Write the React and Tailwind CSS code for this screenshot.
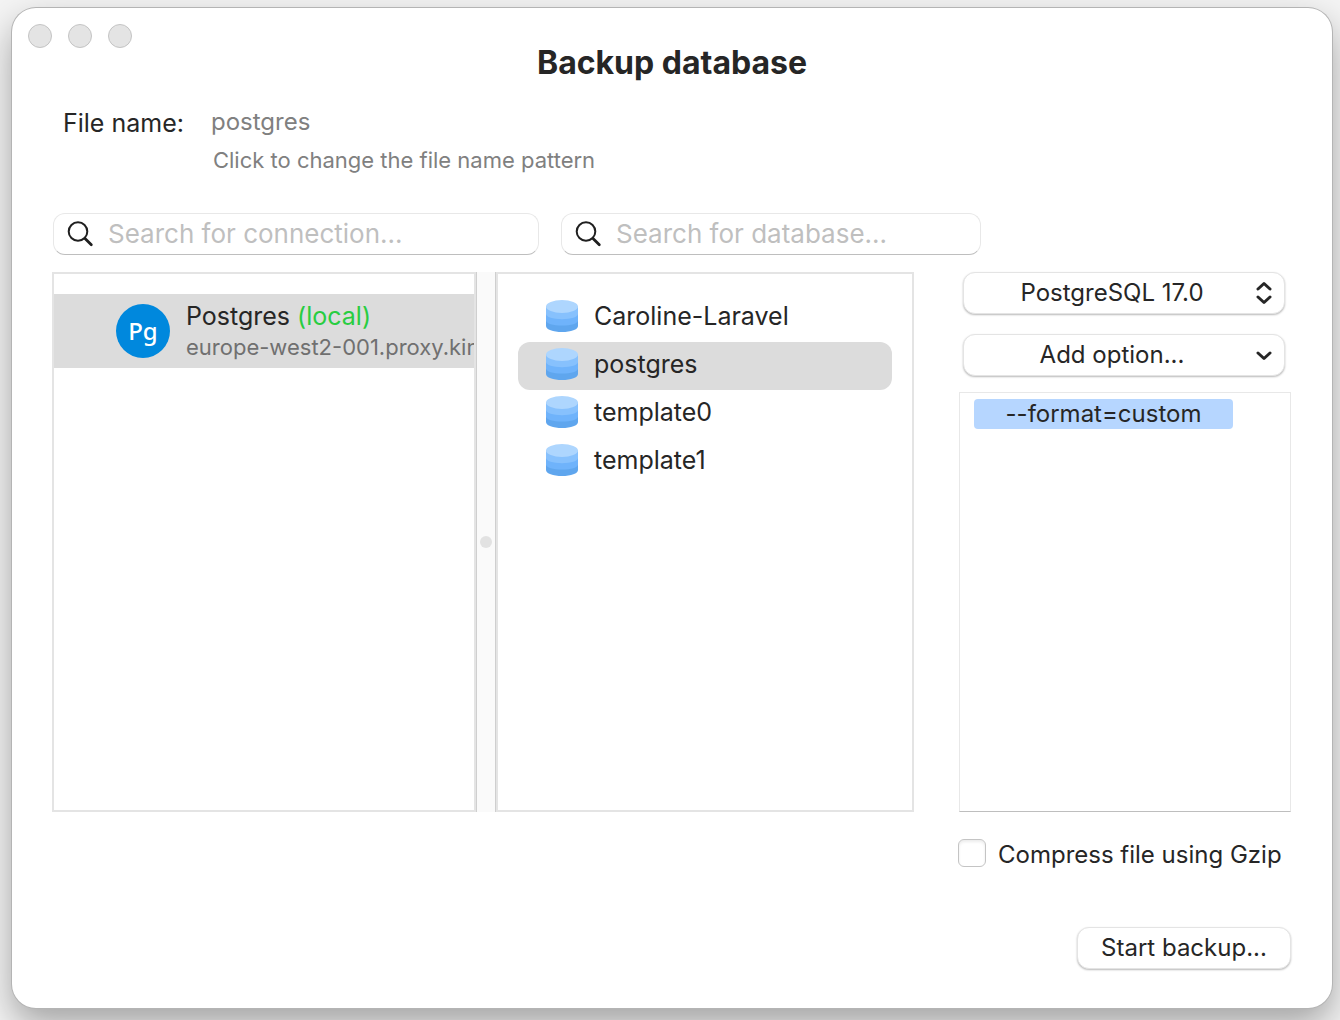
import { useState } from "react";

const databases = ["Caroline-Laravel", "postgres", "template0", "template1"];

function SearchIcon() {
  return (
    <svg className="size-7 shrink-0" viewBox="0 0 28 28" fill="none" stroke="#1f1f1f" strokeLinecap="round">
      <circle cx="12" cy="11.5" r="9.3" strokeWidth="2" />
      <path d="M19 18.5L25.3 24.8" strokeWidth="2.8" />
    </svg>
  );
}

function DatabaseIcon() {
  return (
    <svg className="h-8 w-8 shrink-0" viewBox="0 0 32 32">
      <path d="M0 6.500V26C0 29.500 7 32 16 32s16-2.500 16-6V6.500z" fill="#5fa6ee" />
      <path d="M0 6.500V20.500C0 23.500 7 25.500 16 25.500s16-2 16-5V6.500z" fill="#6fb3fb" />
      <path d="M0 6.500V14C0 17 7 19.200 16 19.200s16-2.200 16-5.200V6.500z" fill="#87c1fd" />
      <ellipse cx="16" cy="6.500" rx="16" ry="6.500" fill="#aed6fe" />
    </svg>
  );
}

function SearchField({ label, className }) {
  return (
    <label
      className={`flex h-[42px] items-center gap-3.5 rounded-xl border border-[#e8e8e8] border-b-[#bebebe] bg-white px-3 ${className}`}
    >
      <SearchIcon />
      <input
        type="text"
        aria-label={label}
        placeholder={label}
        className="min-w-0 flex-1 bg-transparent text-[26px] leading-8 outline-none placeholder:text-[#bfbfbf]"
      />
    </label>
  );
}

function SelectBox({ label, value, children }) {
  return (
    <div className="grid h-[42px] items-center rounded-xl border border-[#e4e4e4] bg-white shadow-[0_1px_2px_rgba(0,0,0,0.28)]">
      <select
        aria-label={label}
        className="col-start-1 row-start-1 h-full w-full appearance-none rounded-xl bg-transparent pr-6 text-center text-[24px] leading-8 outline-none [text-align-last:center]"
      >
        <option>{value}</option>
      </select>
      <span className="pointer-events-none col-start-1 row-start-1 mr-3 justify-self-end">{children}</span>
    </div>
  );
}

export default function App() {
  const [selected, setSelected] = useState("postgres");

  return (
    <div className="flex min-h-screen flex-col overflow-hidden bg-[#f4f4f4] pt-2 pr-2 pb-3 pl-3 font-[Inter,sans-serif] text-[#262626]">
      <main className="flex flex-1 flex-col rounded-3xl bg-white pb-[39px] shadow-[0_0_0_1px_#b4b4b4,0_16px_36px_rgba(0,0,0,0.34)]">
        {/* Window buttons */}
        <div className="flex gap-4 px-4 pt-4">
          <button aria-label="Close" className="size-6 rounded-full border border-[#c4c4c4] bg-[#e4e4e4]" />
          <button aria-label="Minimize" className="size-6 rounded-full border border-[#c4c4c4] bg-[#e4e4e4]" />
          <button aria-label="Zoom" className="size-6 rounded-full border border-[#c4c4c4] bg-[#e4e4e4]" />
        </div>

        <h1 className="text-center text-[32px] leading-[30px] font-bold">Backup database</h1>

        {/* File name */}
        <div className="mt-[29px] grid grid-cols-[auto_1fr] gap-x-[27px] gap-y-[9px] pl-[51px]">
          <label htmlFor="file-name" className="text-[25px] leading-8">
            File name:
          </label>
          <input
            id="file-name"
            defaultValue="postgres"
            className="bg-transparent pb-0.5 text-[24px] leading-[30px] text-[#808080] outline-none"
          />
          <p className="col-start-2 pl-0.5 text-[22px] leading-6 text-[#808080]">
            Click to change the file name pattern
          </p>
        </div>

        <div className="mt-[41px] flex gap-[22px] pr-[351px] pl-[41px]">
          <SearchField label="Search for connection..." className="flex-1" />
          <SearchField label="Search for database..." className="w-[420px]" />
        </div>

        <div className="mt-[17px] flex flex-1 pr-[41px] pl-10">
          {/* Connections */}
          <section
            aria-label="Connections"
            className="min-w-0 flex-1 overflow-hidden border-2 border-[#e4e4e4] pt-5"
          >
            <button className="flex h-[74px] w-full items-center gap-4 bg-[#dcdcdc] pl-[62px] text-left">
              <span className="flex size-[54px] shrink-0 items-center justify-center rounded-full bg-[#0088dd] font-['Noto_Sans',sans-serif] text-[24px] leading-7 font-medium text-white">
                Pg
              </span>
              <span className="min-w-0 whitespace-nowrap">
                <span className="block text-[25px] leading-8">
                  Postgres <span className="text-[#28cd41]">(local)</span>
                </span>
                <span className="block text-[22px] leading-[30px] text-[#707070]">europe-west2-001.proxy.kin</span>
              </span>
            </button>
          </section>

          <div className="flex w-5 items-center justify-center border-x border-[#cfcfcf] bg-[#fafafa]">
            <span className="size-3 rounded-full bg-[#e2e2e2]" />
          </div>

          {/* Databases */}
          <ul className="w-[418px] border-2 border-[#e4e4e4] px-5 pt-5">
            {databases.map((name) => (
              <li key={name}>
                <button
                  onClick={() => setSelected(name)}
                  className={`flex h-12 w-full items-center gap-4 rounded-xl pb-1 pl-7 text-left text-[25px] leading-8 ${
                    name === selected ? "bg-[#dcdcdc]" : ""
                  }`}
                >
                  <DatabaseIcon />
                  {name}
                </button>
              </li>
            ))}
          </ul>

          {/* Dump options */}
          <div className="ml-[45px] flex w-[332px] flex-col">
            <div className="flex flex-col gap-5 pr-1.5 pl-1">
              <SelectBox label="Version" value="PostgreSQL 17.0">
                <svg className="h-6 w-4" viewBox="0 0 16 24" fill="none" stroke="#262626" strokeWidth="3" strokeLinecap="round" strokeLinejoin="round">
                  <path d="M2 8L8 2.500L14 8M2 16L8 21.500L14 16" />
                </svg>
              </SelectBox>
              <SelectBox label="Add option" value="Add option...">
                <svg className="h-6 w-4" viewBox="0 0 16 24" fill="none" stroke="#262626" strokeWidth="3" strokeLinecap="round" strokeLinejoin="round">
                  <path d="M2 10L8 15.500L14 10" />
                </svg>
              </SelectBox>
            </div>
            <ul className="mt-4 flex-1 border border-[#e8e8e8] border-b-[#bebebe] px-3.5 pt-1.5">
              <li className="w-[259px] rounded bg-[#b6d6ff] text-center text-[24px] leading-[30px]">--format=custom</li>
            </ul>
          </div>
        </div>

        <div className="mt-[27px] flex justify-end pr-[41px]">
          <label className="flex w-[333px] items-start gap-3 text-[24px] leading-8 whitespace-nowrap">
            <input
              type="checkbox"
              className="size-7 shrink-0 appearance-none rounded-md border border-[#c4c4c4] bg-white shadow-[inset_0_2px_3px_rgba(0,0,0,0.08)]"
            />
            Compress file using Gzip
          </label>
        </div>

        <div className="mt-14 flex justify-end pr-[41px]">
          <button className="h-[42px] w-[214px] rounded-xl border border-[#e4e4e4] bg-white text-[24px] leading-8 shadow-[0_1px_2px_rgba(0,0,0,0.28)]">
            Start backup...
          </button>
        </div>
      </main>
    </div>
  );
}
